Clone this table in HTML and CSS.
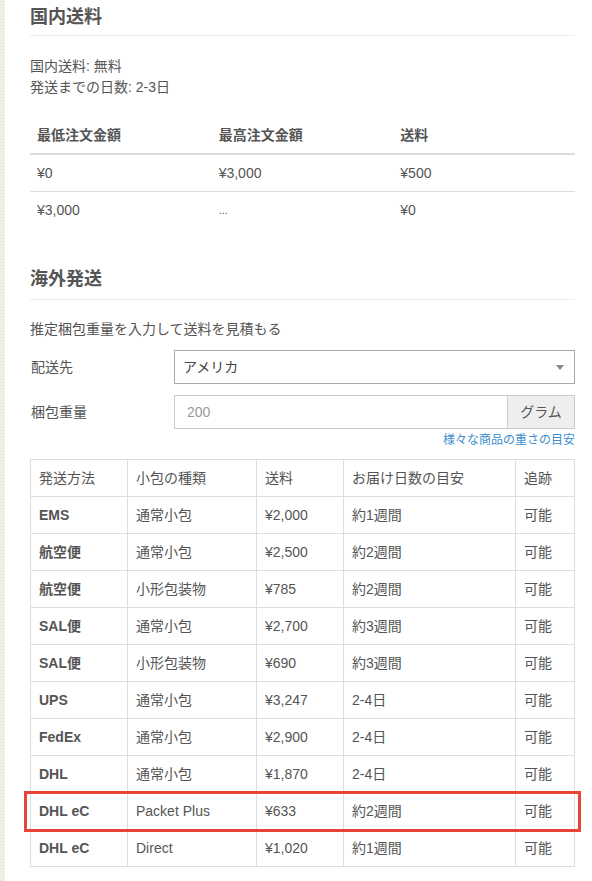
FILE: index.html
```html
<!DOCTYPE html>
<html lang="ja">
<head>
<meta charset="utf-8">
<link rel="stylesheet" href="styles.css">
</head>
<body>
<div class="page">
  <div class="edge"></div>
  <main class="content">
    <h2 class="section-title">国内送料</h2>
    <p class="info">国内送料: 無料<br>発送までの日数: 2-3日</p>
    <table class="simple">
      <thead>
        <tr><th>最低注文金額</th><th>最高注文金額</th><th>送料</th></tr>
      </thead>
      <tbody>
        <tr><td>¥0</td><td>¥3,000</td><td>¥500</td></tr>
        <tr><td>¥3,000</td><td class="dots">...</td><td>¥0</td></tr>
      </tbody>
    </table>

    <h2 class="section-title second">海外発送</h2>
    <p class="lead">推定梱包重量を入力して送料を見積もる</p>
    <div class="form-row">
      <label class="form-label">配送先</label>
      <div class="select"><span>アメリカ</span><span class="caret"></span></div>
    </div>
    <div class="form-row weight">
      <label class="form-label">梱包重量</label>
      <div class="input-group"><span class="input">200</span><span class="addon">グラム</span></div>
    </div>
    <div class="help"><a href="#">様々な商品の重さの目安</a></div>

    <table class="bordered">
      <colgroup>
        <col class="c1"><col class="c2"><col class="c3"><col class="c4"><col>
      </colgroup>
      <thead>
        <tr><th>発送方法</th><th>小包の種類</th><th>送料</th><th>お届け日数の目安</th><th>追跡</th></tr>
      </thead>
      <tbody>
        <tr><td class="m">EMS</td><td>通常小包</td><td>¥2,000</td><td>約1週間</td><td>可能</td></tr>
        <tr><td class="m">航空便</td><td>通常小包</td><td>¥2,500</td><td>約2週間</td><td>可能</td></tr>
        <tr><td class="m">航空便</td><td>小形包装物</td><td>¥785</td><td>約2週間</td><td>可能</td></tr>
        <tr><td class="m">SAL便</td><td>通常小包</td><td>¥2,700</td><td>約3週間</td><td>可能</td></tr>
        <tr><td class="m">SAL便</td><td>小形包装物</td><td>¥690</td><td>約3週間</td><td>可能</td></tr>
        <tr><td class="m">UPS</td><td>通常小包</td><td>¥3,247</td><td>2-4日</td><td>可能</td></tr>
        <tr><td class="m">FedEx</td><td>通常小包</td><td>¥2,900</td><td>2-4日</td><td>可能</td></tr>
        <tr><td class="m">DHL</td><td>通常小包</td><td>¥1,870</td><td>2-4日</td><td>可能</td></tr>
        <tr class="hl"><td class="m"><span class="hlbox"></span>DHL eC</td><td>Packet Plus</td><td>¥633</td><td>約2週間</td><td>可能</td></tr>
        <tr><td class="m">DHL eC</td><td>Direct</td><td>¥1,020</td><td>約1週間</td><td>可能</td></tr>
      </tbody>
    </table>
  </main>
</div>
</body>
</html>
```

FILE: styles.css
```css
* { box-sizing: border-box; }
html, body { margin: 0; padding: 0; background: #fff; }
body {
  font-family: "Liberation Sans", "Noto Sans CJK JP", sans-serif;
  font-size: 14px;
  line-height: 20px;
  color: #555;
}
.page { display: flex; min-height: 881px; }
.edge {
  width: 5px;
  flex: 0 0 5px;
  background-color: #f2efe9;
  background-image: repeating-linear-gradient(0deg, rgba(0,0,0,0.03) 0 1px, transparent 1px 3px);
}
.content { width: 545px; margin-left: 25px; }
.section-title {
  margin: 0;
  font-size: 18px;
  font-weight: bold;
  line-height: 26px;
  padding: 4px 0 5px;
  border-bottom: 1px solid #eee;
  color: #555;
}
.section-title.second { margin-top: 34px; padding-bottom: 7px; }
.info { margin: 20px 0 19px; line-height: 21px; }
table { width: 100%; border-collapse: collapse; }
.simple th, .simple td {
  text-align: left;
  padding: 8px 7px;
  width: 33.33%;
  line-height: 20px;
}
.simple th { border-bottom: 2px solid #ddd; font-weight: bold; }
.simple tbody tr:first-child td { border-bottom: 1px solid #ddd; }
.dots { font-size: 11px; }
.lead { margin: 19px 0 11px; }
.form-row { display: flex; align-items: center; margin-bottom: 11px; }
.form-row.weight { margin-bottom: 2px; }
.form-label { width: 144px; flex: 0 0 144px; padding-left: 1px; }
.select {
  flex: 1;
  height: 34px;
  border: 1px solid #aaa;
  padding: 0 8px;
  display: flex;
  align-items: center;
  justify-content: space-between;
  color: #444;
}
.caret {
  width: 0; height: 0;
  border-left: 4px solid transparent;
  border-right: 4px solid transparent;
  border-top: 5px solid #888;
  margin-right: 2px;
}
.input-group { flex: 1; display: flex; height: 34px; }
.input {
  flex: 1;
  border: 1px solid #ccc;
  padding: 0 12px;
  display: flex;
  align-items: center;
  color: #999;
}
.addon {
  width: 67px;
  border: 1px solid #ccc;
  border-left: 0;
  background: #eee;
  display: flex;
  align-items: center;
  justify-content: center;
  color: #555;
}
.help { text-align: right; font-size: 12px; line-height: 18px; margin-bottom: 10px; }
.help a { color: #3c8dcf; text-decoration: none; }
.bordered { table-layout: fixed; border: 1px solid #ddd; }
.c1 { width: 97px; }
.c2 { width: 129px; }
.c3 { width: 87px; }
.c4 { width: 172px; }
.bordered th, .bordered td {
  border: 1px solid #ddd;
  padding: 8px 8px;
  text-align: left;
  font-weight: normal;
  line-height: 20px;
  height: 37px;
}
.bordered td.m { font-weight: bold; }
.hl { position: relative; }
.hlbox {
  position: absolute;
  left: -7px;
  right: -6px;
  top: -2px;
  bottom: -2px;
  border: 3px solid #e8443a;
  pointer-events: none;
}
```
